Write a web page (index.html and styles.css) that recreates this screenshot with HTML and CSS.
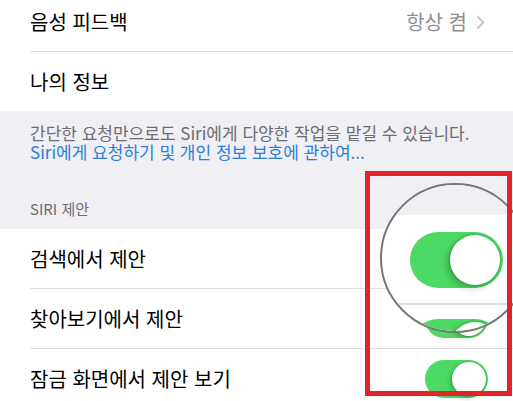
FILE: index.html
```html
<!DOCTYPE html>
<html lang="ko">
<head>
    <meta charset="UTF-8">
    <title>Siri 및 검색</title>
    <meta name="viewport" content="width=device-width, initial-scale=1.0">
    <link rel="stylesheet" href="styles.css">
</head>
<body>
    <div class="group group-top">
        <div class="row">
            <span class="row-title">음성 피드백</span>
            <span class="row-value">항상 켬
                <svg class="chevron" width="9" height="15" viewBox="0 0 9 15"><polyline points="1.5,1.5 7.5,7.5 1.5,13.5" fill="none" stroke="#c4c4c9" stroke-width="1.8"/></svg>
            </span>
        </div>
        <div class="row">
            <span class="row-title">나의 정보</span>
        </div>
    </div>

    <div class="section-gap">
        <p class="footnote">간단한 요청만으로도 Siri에게 다양한 작업을 맡길 수 있습니다.</p>
        <a class="footnote-link" href="#">Siri에게 요청하기 및 개인 정보 보호에 관하여...</a>
        <div class="section-head">SIRI 제안</div>
    </div>

    <div class="group">
        <div class="row">
            <span class="row-title">검색에서 제안</span>
            <span class="switch on"><span class="knob"></span></span>
        </div>
        <div class="row">
            <span class="row-title">찾아보기에서 제안</span>
            <span class="switch on"><span class="knob"></span></span>
        </div>
        <div class="row">
            <span class="row-title">잠금 화면에서 제안 보기</span>
            <span class="switch on"><span class="knob"></span></span>
        </div>
    </div>

    <!-- 확대경 표시 -->
    <div class="loupe">
        <div class="loupe-gray"></div>
        <div class="loupe-line"></div>
        <span class="switch big on loupe-sw1"><span class="knob"></span></span>
        <span class="switch big on loupe-sw2"><span class="knob"></span></span>
    </div>
    <div class="mark-box"></div>
</body>
</html>
```

FILE: styles.css
```css
html, body { height: 100%; }
body {
    margin: 0;
    background: #fff;
    font-family: "Noto Sans CJK KR", "Noto Sans", sans-serif;
    color: #000;
    position: relative;
    overflow: hidden;
}
.group { background: #fff; }
.group-top { margin-top: -8px; }
.row {
    margin-left: 30px;
    padding-right: 25px;
    height: 59px;
    display: flex; align-items: center; justify-content: space-between;
    border-bottom: 1px solid #dedee2;
}
.row:last-child { border-bottom: none; }
.group-top .row { padding-right: 28px; }
.row-title { font-size: 20px; }
.row-value {
    font-size: 20px; color: #8e8e93;
    display: flex; align-items: center; gap: 9px;
}
.chevron { margin-top: 2px; }
.section-gap {
    background: #efeff4;
    padding: 12px 10px 11px 30px;
}
.footnote {
    margin: 0;
    font-size: 17px; line-height: 19px;
    color: #6d6d72;
    white-space: nowrap;
}
.footnote-link {
    display: block;
    font-size: 17px; line-height: 19px;
    color: #2c7fd9; text-decoration: none;
}
.section-head {
    margin-top: 39px;
    font-size: 15px; line-height: 18px;
    color: #6d6d72;
}
.switch {
    width: 63px; height: 38px;
    border-radius: 19px;
    background: #4cd964;
    position: relative;
    flex: none;
}
.knob {
    position: absolute;
    top: 2px; right: 2px;
    width: 34px; height: 34px;
    border-radius: 50%;
    background: #fff;
    box-shadow: -2px 2px 5px rgba(0,0,0,0.22), 0 0 0 1px #44c95a;
}
.switch.big { width: 93px; height: 56px; border-radius: 28px; }
.switch.big .knob { top: 3px; right: 3px; width: 50px; height: 50px; box-shadow: -3px 3px 7px rgba(0,0,0,0.22), 0 0 0 2px #44c95a; }
.loupe {
    position: absolute;
    left: 380px; top: 183px;
    width: 146px; height: 146px;
    border: 2px solid #777;
    border-radius: 50%;
    overflow: hidden;
    background: #fff;
}
.loupe-gray { position: absolute; left: 0; top: 0; width: 100%; height: 30px; background: #efeff4; }
.loupe-line { position: absolute; left: 0; top: 118px; width: 100%; height: 1.5px; background: #dedee2; }
.loupe-sw1 { position: absolute; left: 28px; top: 47px; }
.loupe-sw2 { position: absolute; left: 28px; top: 134px; }
.mark-box {
    position: absolute;
    left: 365px; top: 171px;
    width: 137px; height: 215px;
    border: 5px solid #e3232a;
}
```
